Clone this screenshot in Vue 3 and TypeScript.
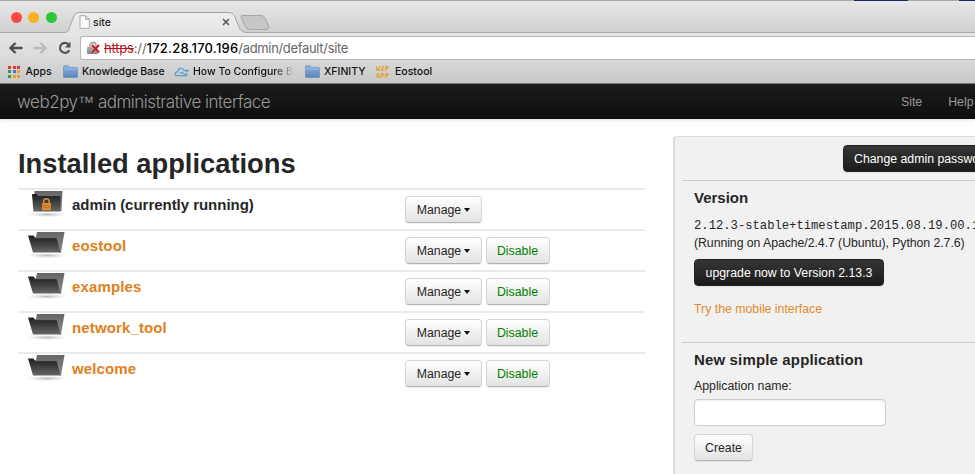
<script setup lang="ts">
interface InstalledApp {
  name: string
  running?: boolean
}

const apps: InstalledApp[] = [
  { name: 'admin (currently running)', running: true },
  { name: 'eostool' },
  { name: 'examples' },
  { name: 'network_tool' },
  { name: 'welcome' },
]

const dotColors = ['#e8323c', '#e8323c', '#e8323c', '#2f9e54', '#3478e0', '#f0a020', '#2f9e54', '#f0a020', '#f0a020']
</script>

<template>
  <div class="window">
    <svg class="defs" width="0" height="0" aria-hidden="true">
      <defs>
        <linearGradient id="blueFolder" x2="0" y2="1"><stop stop-color="#8db4df" /><stop offset="1" stop-color="#5884b8" /></linearGradient>
        <linearGradient id="darkFolder" x2="0" y2="1"><stop stop-color="#1c1c1c" /><stop offset="1" stop-color="#666" /></linearGradient>
        <linearGradient id="backFolder" x2="0" y2="1"><stop stop-color="#666" /><stop offset="1" stop-color="#8a8a8a" /></linearGradient>
        <radialGradient id="folderShade"><stop stop-color="#999" stop-opacity=".7" /><stop offset="1" stop-color="#ccc" stop-opacity="0" /></radialGradient>
        <linearGradient id="tabFill" x2="0" y2="1"><stop stop-color="#efefef" /><stop offset="1" stop-color="#e4e4e4" /></linearGradient>
        <linearGradient id="lockFill" x2="0" y2="1"><stop stop-color="#b5b5b5" /><stop offset="1" stop-color="#858585" /></linearGradient>
      </defs>
    </svg>

    <div class="backdrop"><i class="navy wide"></i><i class="navy"></i></div>

    <div class="titlebar">
      <div class="lights"><i class="red"></i><i class="yellow"></i><i class="green"></i></div>
      <div class="tab">
        <svg class="tab-shape" width="210" height="22" viewBox="0 0 210 22">
          <path d="M0 21.500C5 21.500 5 18 6 15L10 5Q11.500 1.500 15 1.500H165Q169 1.500 170.500 5L175 16Q177 21.500 183 21.500V22H0Z" fill="url(#tabFill)" />
          <path d="M0 21.500C5 21.500 5 18 6 15L10 5Q11.500 1.500 15 1.500H165Q169 1.500 170.500 5L175 16Q177 21.500 183 21.500" fill="none" stroke="#a3a3a3" />
          <path d="M179 4.500H197Q200 4.500 201 7L204.500 15Q205.500 18.500 202 18.500H186Q182.500 18.500 181 15L177.500 7.500Q176 4.500 179 4.500Z" fill="#c7c7c7" stroke="#a7a7a7" />
        </svg>
        <svg class="page-icon" width="11" height="14" viewBox="0 0 11 14"><path d="M1 .7H6.500L10.300 4.500V13.300H1ZM6.500 .7V4.500H10.300" fill="#fafafa" stroke="#aaa" /></svg>
        <span class="tab-title">site</span>
        <svg class="close" width="8" height="8" viewBox="0 0 8 8"><path d="M1 1L7 7M7 1L1 7" stroke="#555" stroke-width="1.500" /></svg>
      </div>
    </div>

    <div class="toolbar">
      <svg class="nav" width="14" height="12" viewBox="0 0 14 12"><path d="M13.500 6H2M6.500 1L1.500 6L6.500 11" fill="none" stroke="#505050" stroke-width="2.400" /></svg>
      <svg class="nav forward" width="14" height="12" viewBox="0 0 14 12"><path d="M.5 6H12M7.500 1L12.500 6L7.500 11" fill="none" stroke="#bababa" stroke-width="2.400" /></svg>
      <svg class="nav reload" width="14" height="14" viewBox="0 0 14 14"><path d="M11.400 9.200A5 5 0 1 1 10.600 3.400" fill="none" stroke="#505050" stroke-width="2.100" /><path d="M12.500 .8V6.400H6.900Z" fill="#505050" /></svg>
      <div class="omnibox">
        <svg class="lock" width="13" height="14" viewBox="0 0 13 14">
          <path d="M3 6V4.500a3 3 0 0 1 6 0V6" fill="none" stroke="#aaa" stroke-width="1.800" />
          <rect x="0" y="5.500" width="11" height="7.500" rx="1" fill="url(#lockFill)" />
          <path d="M5 4L12 11.500M12 4L5 11.500" stroke="#fff" stroke-width="2.600" stroke-opacity=".5" /><path d="M5 4L12 11.500M12 4L5 11.500" stroke="#c2182a" stroke-width="1.900" />
        </svg>
        <span class="url"><s>https</s><span class="dim">://</span><b>172.28.170.196</b><span class="dim path">/admin/default/site</span></span>
      </div>
    </div>

    <div class="bookmarks">
      <span class="bm bm-apps"><span class="dots"><i v-for="(c, i) in dotColors" :key="i" :style="{ background: c }"></i></span>Apps</span>
      <span class="bm bm-kb"><svg width="15" height="13" viewBox="0 0 15 13"><path d="M.5 12V2Q.5 .7 1.800 .7H5L6.500 2.400H13.200Q14.500 2.400 14.500 3.700V12Q14.500 12.500 14 12.500H1Q.5 12.500 .5 12Z" fill="url(#blueFolder)" stroke="#6c91bd" stroke-width=".7" /><path d="M1 4H14" stroke="#a8c6e7" stroke-width=".6" /></svg>Knowledge Base</span>
      <span class="bm bm-how"><svg width="15" height="10" viewBox="0 0 15 10"><path d="M3.500 8.600Q1 8.500 1 6.500Q1.300 4.700 4 5Q3.800 2 6.500 1.300Q9.300 1 10.200 3.700Q12.500 2.600 14 3.600Q12.500 4 12 5M3.500 8.600H12.500Q13.500 7.700 12.500 6.800Q10.500 7.500 9 6Q7.500 4.800 6 6.300" fill="none" stroke="#5a9fd0" stroke-width="1.200" /></svg><span class="fade">How To Configure BIN</span></span>
      <span class="bm bm-xf"><svg width="15" height="13" viewBox="0 0 15 13"><path d="M.5 12V2Q.5 .7 1.800 .7H5L6.500 2.400H13.200Q14.500 2.400 14.500 3.700V12Q14.500 12.500 14 12.500H1Q.5 12.500 .5 12Z" fill="url(#blueFolder)" stroke="#6c91bd" stroke-width=".7" /><path d="M1 4H14" stroke="#a8c6e7" stroke-width=".6" /></svg>XFINITY</span>
      <span class="bm bm-eo"><span class="w2p"><span>W2P</span><span>APP</span></span>Eostool</span>
    </div>

    <header class="site-header">
      <span class="brand">web2py<span class="tm">™</span> administrative interface</span>
      <nav><a>Site</a><a class="help">Help</a></nav>
    </header>

    <main>
      <section class="installed">
        <h1>Installed applications</h1>
        <div v-for="app in apps" :key="app.name" class="row">
          <svg class="folder" width="42" height="27" viewBox="0 0 42 27">
            <ellipse cx="21" cy="24.500" rx="21" ry="2.700" fill="url(#folderShade)" />
            <template v-if="app.running">
              <path d="M8.500 1H36.500L35.500 21H30L8.500 10Z" fill="url(#backFolder)" />
              <path d="M6 5Q6 4 7 4H10.500L12 6H33.500L34.500 7V21.500H7.500Z" fill="url(#darkFolder)" />
              <rect x="16" y="13" width="9" height="7.200" rx="1" fill="#df8b35" />
              <path d="M17.700 13V11.500a2.700 2.700 0 0 1 5.400 0V13" fill="none" stroke="#df8b35" stroke-width="1.500" />
              <path d="M16.500 15.500H24.500M16.500 17.500H24.500" stroke="#a9611c" stroke-width=".6" />
            </template>
            <template v-else>
              <path d="M11 1H38.500L35 21.500L8 16Z" fill="url(#backFolder)" />
              <path d="M2 4.500H7.500L9 6.500H31L35 21.500H7Z" fill="url(#darkFolder)" />
              <path d="M9 6.700H31L35 21.500" fill="none" stroke="#929292" stroke-width=".6" />
            </template>
          </svg>
          <span class="app-name" :class="{ running: app.running }">{{ app.name }}</span>
          <div class="actions">
            <button class="btn manage">Manage<i class="caret"></i></button>
            <button v-if="!app.running" class="btn disable">Disable</button>
          </div>
        </div>
      </section>

      <aside>
        <div class="password"><button class="btn dark change">Change admin password</button></div>
        <div class="box version">
          <h3>Version</h3>
          <code>2.12.3-stable+timestamp.2015.08.19.00.18.03</code>
          <p>(Running on Apache/2.4.7 (Ubuntu), Python 2.7.6)</p>
          <button class="btn dark upgrade">upgrade now to Version 2.13.3</button>
          <a class="mobile">Try the mobile interface</a>
        </div>
        <div class="box create">
          <h3 class="wide-title">New simple application</h3>
          <label for="app-name">Application name:</label>
          <input id="app-name" type="text">
          <button class="btn submit">Create</button>
        </div>
      </aside>
    </main>
  </div>
</template>

<style>
body { margin: 0; overflow: hidden; }
</style>

<style scoped>
* { box-sizing: border-box; }
.window { width: 975px; height: 474px; overflow: hidden; background: #fff; font-family: "Liberation Sans", Arial, sans-serif; font-size: 13px; color: #262626; white-space: nowrap; }
.defs { display: block; }
.backdrop { height: 1px; background: #a9a9a9; display: flex; justify-content: flex-end; gap: 51px; }
.navy { width: 16px; background: #17266b; }
.navy.wide { width: 54px; }
.titlebar { height: 32px; background: linear-gradient(#e8e8e8, #d0d0d0); border-bottom: 1px solid #a9a9a9; display: flex; }
.lights { display: flex; gap: 6.500px; padding: 11px 0 0 10.500px; }
.lights i { width: 11px; height: 11px; border-radius: 50%; background: #fc4948; }
.lights .yellow { background: #fdb124; }
.lights .green { background: #2ac833; }
.tab { position: relative; display: flex; align-items: center; width: 210px; height: 22px; margin: 10px 0 0 7.500px; font: 500 10.500px Inter, sans-serif; color: #222; }
.tab-shape { position: absolute; left: 0; top: 0; }
.page-icon { position: relative; margin-left: 15px; }
.tab-title { position: relative; margin-left: 3px; width: 129px; }
.close { position: relative; }
.toolbar { height: 27px; display: flex; align-items: center; background: linear-gradient(#e5e5e5, #dadada); padding: 2px 0 0 9px; }
.nav.forward { margin-left: 10px; }
.nav.reload { margin-left: 11px; }
.omnibox { flex: 1; align-self: flex-start; height: 24px; margin: 1px 0 0 8px; border: 1px solid #b5b5b5; border-right: 0; border-radius: 3px 0 0 3px; background: #fff; display: flex; align-items: center; padding-left: 6px; font: 13px Inter, sans-serif; letter-spacing: -.1px; }
.url { margin-left: 4px; color: #000; }
.url s { color: #b3121d; letter-spacing: -.2px; }
.url b { font-weight: 500; letter-spacing: .22px; }
.url .dim { color: #666; }
.url .path { letter-spacing: -.33px; }
.bookmarks { height: 24px; background: linear-gradient(#d8d8d8, #c8c8c8); border-bottom: 1px solid #828282; display: flex; font: 500 10.500px Inter, sans-serif; color: #111; }
.bm { display: flex; align-items: center; gap: 4px; flex: none; }
.bm-apps { width: 55px; margin-left: 8px; gap: 5.500px; }
.bm-kb { width: 111px; letter-spacing: -.1px; }
.bm-how { width: 131px; gap: 4px; letter-spacing: -.02px; }
.bm-xf { width: 71px; }
.dots { display: grid; grid-template-columns: repeat(3, 3px); gap: 1.500px; }
.dots i { height: 3px; }
.fade { width: 101px; overflow: hidden; mask-image: linear-gradient(90deg, #000 80%, transparent); }
.w2p { display: flex; flex-direction: column; gap: 1px; width: 14px; font: 700 7px/6px "Liberation Mono", monospace; letter-spacing: .3px; color: #e3a01d; margin: 2px 1px 0 0; }
.w2p span { height: 6px; }
.site-header { height: 35px; background: linear-gradient(#1c1c1c, #0e0e0e); display: flex; justify-content: space-between; align-items: center; padding-left: 17px; color: #999; box-shadow: 0 1px 4px #0002; }
.brand { font: 300 17px/22px Inter, sans-serif; letter-spacing: -.48px; }
.tm { font: 16.500px/18px "Liberation Sans", Arial, sans-serif; color: #858585; }
.site-header nav { display: flex; gap: 26px; width: 74px; font-size: 12.300px; }
main { display: grid; grid-template-columns: 655px 302px; padding: 17px 0 0 18px; }
h1 { margin: 0; font-size: 27.300px; line-height: 30px; height: 52px; padding-top: 13px; }
.row { width: 627px; height: 41px; border-top: 2px solid #eaeaea; display: flex; }
.folder { margin-left: 8px; flex: none; }
.app-name { width: 337px; padding-left: 4px; line-height: 30px; font-size: 15px; font-weight: 700; color: #df7f20; letter-spacing: .13px; }
.app-name.running { color: #262626; letter-spacing: -.03px; }
.actions { display: flex; gap: 3.500px; padding-top: 6px; }
.btn { font: 12.300px "Liberation Sans", Arial, sans-serif; height: 27px; padding: 0; border: 1px solid #d5d5d5; border-bottom-color: #b3b3b3; border-radius: 4px; background: linear-gradient(#fff, #e3e3e3); color: #262626; white-space: nowrap; display: flex; align-items: center; justify-content: center; box-shadow: 0 1px 1px #0001; }
.manage { width: 77px; gap: 3px; }
.caret { border: solid transparent; border-width: 4px 3.500px 0; border-top-color: #111; }
.disable { width: 64px; color: #008000; }
aside { height: 360px; border: 1px solid #ddd; border-width: 1px 0 0 2px; border-radius: 4px 0 0; background: #f1f1f1; padding-left: 7px; }
.password { height: 43px; padding: 8px 0 0 161px; }
.btn.dark { border-color: #222; background: linear-gradient(#363636, #1b1b1b); color: #fff; }
.change { width: 152px; padding-left: 10px; justify-content: flex-start; }
.box { border-top: 1px solid #ccc; padding-left: 12px; }
.box.version { height: 162px; }
h3 { margin: 0; font-size: 15px; line-height: 18px; padding-top: 8px; }
.wide-title { letter-spacing: .15px; }
code { display: block; font: 12.200px/17px "Liberation Mono", monospace; margin-top: 11px; }
p { margin: 0; font-size: 12.300px; line-height: 16px; letter-spacing: -.06px; }
.upgrade { width: 190px; margin-top: 8px; }
.mobile { display: block; margin-top: 15px; line-height: 17px; color: #e38b2c; font-size: 12.300px; }
label { display: block; font-size: 12.300px; line-height: 17px; margin-top: 9px; }
input { display: block; width: 192px; height: 27px; margin: 4px 0 8px; border: 1px solid #ccc; border-radius: 4px; background: #fff; box-shadow: inset 0 1px 1px #0001; }
.submit { width: 59px; }
</style>
